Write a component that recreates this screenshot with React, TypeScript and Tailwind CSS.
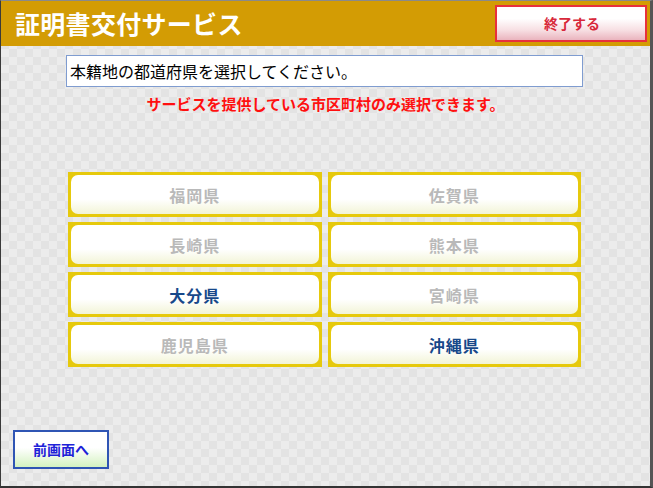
import React from "react";

const prefs = [
  { name: "福岡県", on: false },
  { name: "佐賀県", on: false },
  { name: "長崎県", on: false },
  { name: "熊本県", on: false },
  { name: "大分県", on: true },
  { name: "宮崎県", on: false },
  { name: "鹿児島県", on: false },
  { name: "沖縄県", on: true },
];

function PrefButton({ name, on }: { name: string; on: boolean }) {
  return (
    <div className="h-[45px] bg-[#e6c90c] p-[3px]">
      <div
        className={
          "flex h-full items-center justify-center rounded-[7px] bg-[linear-gradient(#ffffff_0%,#ffffff_62%,#f2f4d6_100%)] text-[16px] font-bold tracking-[1px] " +
          (on ? "text-[#17488a]" : "text-[#b9b9b9]")
        }
      >
        {name}
      </div>
    </div>
  );
}

export default function App() {
  return (
    <div
      className="flex h-[488px] w-[653px] flex-col border-t border-l border-r-[3px] border-b-2 border-t-[#8a8a8a] border-l-[#3a3a3a] border-r-[#555555] border-b-[#333333] bg-[conic-gradient(#e3e3e3_25%,#ececec_0_50%,#e3e3e3_0_75%,#ececec_0)] bg-[length:16px_16px]"
      style={{ fontFamily: '"Noto Sans CJK JP", "Noto Sans", sans-serif' }}
    >
      <header className="flex h-[45px] shrink-0 items-center justify-between bg-[#d39c04] pl-[14px] pr-[3px]">
        <h1 className="text-[25px] font-bold leading-none tracking-[0.3px] text-white">
          証明書交付サービス
        </h1>
        <button className="flex h-[37px] w-[152px] items-center justify-center border-2 border-[#e8303c] bg-[linear-gradient(#ffffff_0%,#ffffff_35%,#f7dfe3_70%,#eab4be_100%)] pl-[2px] text-[14px] font-bold text-[#d8283a]">
          終了する
        </button>
      </header>

      <div className="ml-[65px] mt-[9px] flex h-[32px] w-[517px] items-center border border-[#7f9cd0] bg-white pl-[3px] text-[16px] text-black">
        本籍地の都道府県を選択してください。
      </div>

      <p className="mt-[7px] text-center text-[15px] font-bold leading-[20px] text-[#ff1010]">
        サービスを提供している市区町村のみ選択できます。
      </p>

      <div className="ml-[67px] mt-[58px] grid w-[513px] grid-cols-2 gap-x-[6px] gap-y-[5px]">
        {prefs.map((p) => (
          <PrefButton key={p.name} name={p.name} on={p.on} />
        ))}
      </div>

      <button className="mb-[17px] ml-[12px] mt-auto flex h-[39px] w-[96px] items-center justify-center border-2 border-[#2f55b4] bg-[linear-gradient(#ffffff_0%,#ffffff_45%,#d4f2c0_100%)] text-[14px] font-bold text-[#1e22d8]">
        前画面へ
      </button>
    </div>
  );
}
